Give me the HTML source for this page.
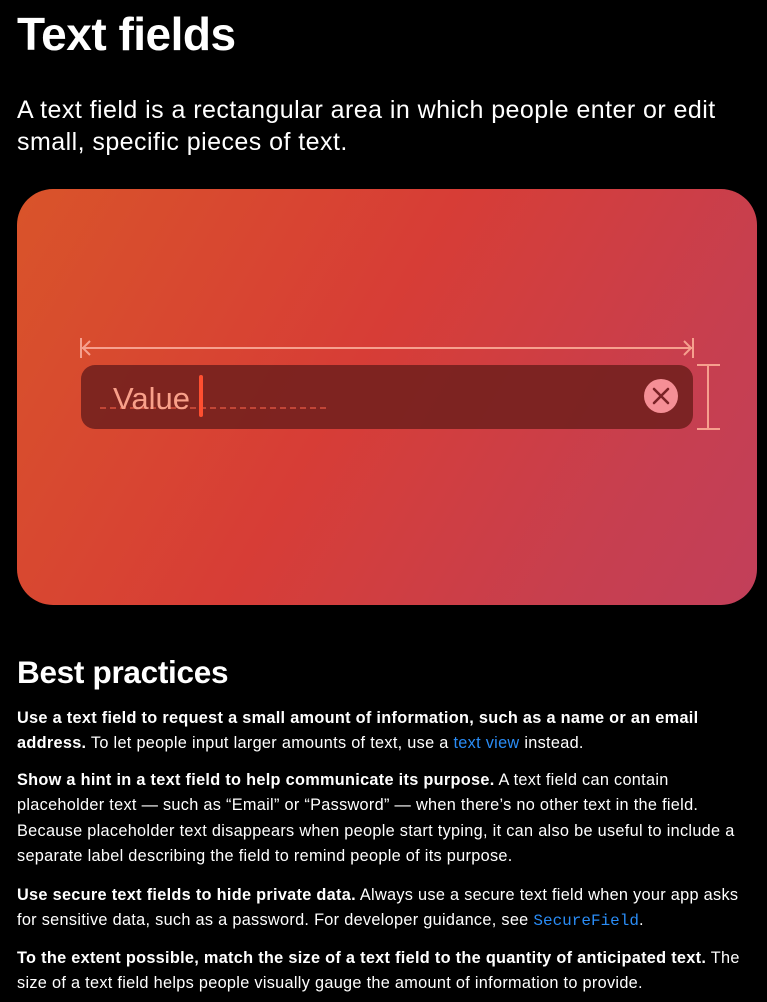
<!DOCTYPE html>
<html><head><meta charset="utf-8"><style>
body{margin:0;background:#000;color:#fff;font-family:"Liberation Sans",sans-serif;width:767px;height:1002px;overflow:hidden;position:relative}
.a{position:absolute;white-space:nowrap}
h1{position:absolute;left:17px;top:7px;margin:0;font-size:46px;font-weight:bold;letter-spacing:-0.5px}
.sub{left:17px;top:94px;font-size:25px;line-height:32px;letter-spacing:0.45px}
.card{position:absolute;left:17px;top:189px;width:740px;height:416px;border-radius:36px;background:linear-gradient(120deg,#d9542a 0%,#d73d36 45%,#c73f4f 80%,#c23f5a 100%)}
h2{position:absolute;left:17px;top:654px;margin:0;font-size:31.5px;font-weight:bold;letter-spacing:-0.3px}
.p{left:17px;font-size:16.3px;line-height:25.3px;letter-spacing:0.3px}
.l{color:#2a8cf5}
code{font-family:"Liberation Mono",monospace;color:#2a8cf5;font-size:16px;letter-spacing:0}
</style></head><body>
<h1>Text fields</h1>
<div class="a sub">A text field is a rectangular area in which people enter or edit<br>small, specific pieces of text.</div>
<div class="card"></div>
<svg class="a" style="left:0;top:0" width="767" height="640">
<g stroke="#f6a08e" stroke-width="2" fill="none">
<line x1="81" y1="338" x2="81" y2="358"/><line x1="693" y1="338" x2="693" y2="358"/>
<line x1="82" y1="348" x2="692" y2="348"/>
<polyline points="90,341 83,348 90,355"/><polyline points="684,341 691,348 684,355"/>
<line x1="708" y1="365" x2="708" y2="429"/><line x1="697" y1="365" x2="720" y2="365"/><line x1="697" y1="429" x2="720" y2="429"/>
</g>
<rect x="81" y="365" width="612" height="64" rx="14" fill="#6e1f1c" opacity="0.85"/>
<line x1="100" y1="408" x2="328" y2="408" stroke="#d9513f" stroke-width="1.5" stroke-dasharray="6,4"/>
<text x="113" y="409" font-family="Liberation Sans" font-size="31" fill="#f9a08a">Value</text>
<rect x="199" y="375" width="4" height="42" rx="2" fill="#ff4f30"/>
<circle cx="661" cy="396" r="17" fill="#f58f96"/>
<path d="M654 389L668 403M668 389L654 403" stroke="#7a2226" stroke-width="2.6" stroke-linecap="round"/>
</svg>
<h2>Best practices</h2>
<div class="a p" style="top:706px"><b>Use a text field to request a small amount of information, such as a name or an email<br>address.</b> To let people input larger amounts of text, use a <span class="l">text view</span> instead.</div>
<div class="a p" style="top:768px"><b>Show a hint in a text field to help communicate its purpose.</b> A text field can contain<br>placeholder text — such as “Email” or “Password” — when there’s no other text in the field.<br>Because placeholder text disappears when people start typing, it can also be useful to include a<br>separate label describing the field to remind people of its purpose.</div>
<div class="a p" style="top:883px"><b>Use secure text fields to hide private data.</b> Always use a secure text field when your app asks<br>for sensitive data, such as a password. For developer guidance, see <code>SecureField</code>.</div>
<div class="a p" style="top:946px"><b>To the extent possible, match the size of a text field to the quantity of anticipated text.</b> The<br>size of a text field helps people visually gauge the amount of information to provide.</div>
</body></html>
